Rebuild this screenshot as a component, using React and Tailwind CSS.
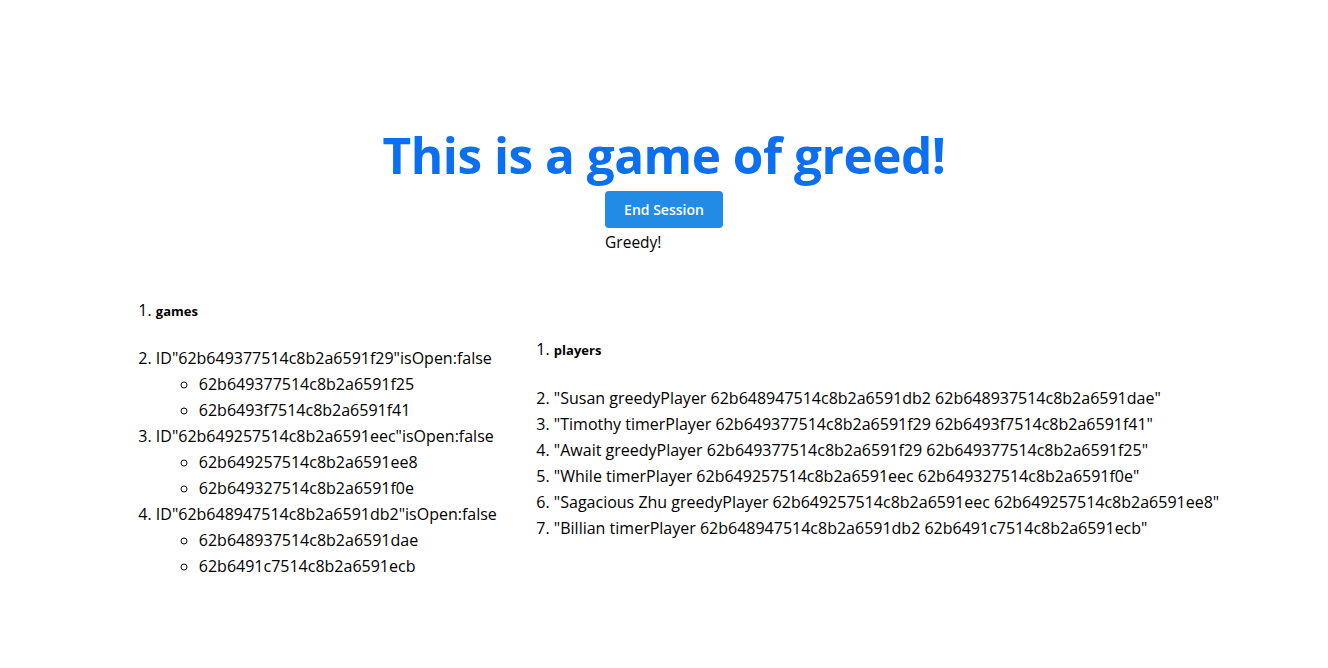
import React from 'react';

const games = [
  { id: '62b649377514c8b2a6591f29', players: ['62b649377514c8b2a6591f25', '62b6493f7514c8b2a6591f41'] },
  { id: '62b649257514c8b2a6591eec', players: ['62b649257514c8b2a6591ee8', '62b649327514c8b2a6591f0e'] },
  { id: '62b648947514c8b2a6591db2', players: ['62b648937514c8b2a6591dae', '62b6491c7514c8b2a6591ecb'] },
];

const players = [
  'Susan greedyPlayer 62b648947514c8b2a6591db2 62b648937514c8b2a6591dae',
  'Timothy timerPlayer 62b649377514c8b2a6591f29 62b6493f7514c8b2a6591f41',
  'Await greedyPlayer 62b649377514c8b2a6591f29 62b649377514c8b2a6591f25',
  'While timerPlayer 62b649257514c8b2a6591eec 62b649327514c8b2a6591f0e',
  'Sagacious Zhu greedyPlayer 62b649257514c8b2a6591eec 62b649257514c8b2a6591ee8',
  'Billian timerPlayer 62b648947514c8b2a6591db2 62b6491c7514c8b2a6591ecb',
];

export default function App() {
  return (
    <div className="min-h-screen bg-white text-black text-[16px] leading-[26px] font-['Open_Sans',sans-serif]">
      {/* Header */}
      <div className="flex flex-col items-center pt-[124px]">
        <h1 className="text-[49.5px] leading-[62px] font-bold text-[#0b6ff2] tracking-[-0.5px]">
          This is a game of greed!
        </h1>
        <div className="mt-[5px] flex flex-col items-start">
          <button className="h-[37px] px-[19px] rounded-[4px] bg-[#228be6] text-white text-[14px] font-semibold">
            End Session
          </button>
          <div className="mt-[1px] text-[15.5px] leading-[26px]">Greedy!</div>
        </div>
      </div>

      {/* Lists */}
      <div className="mt-[42px] flex items-center justify-center gap-[25px] pl-[15px]">
        <ol className="list-decimal pl-[32px]">
          <li>
            <div className="text-[13px] font-bold mb-[21px]">games</div>
          </li>
          {games.map((g) => (
            <li key={g.id}>
              ID"{g.id}"isOpen:false
              <ul className="list-[circle] pl-[43px]">
                {g.players.map((p) => (
                  <li key={p}>{p}</li>
                ))}
              </ul>
            </li>
          ))}
        </ol>
        <ol className="list-decimal pl-[32px]">
          <li>
            <div className="text-[13px] font-bold mb-[22px]">players</div>
          </li>
          {players.map((p) => (
            <li key={p}>"{p}"</li>
          ))}
        </ol>
      </div>
    </div>
  );
}
